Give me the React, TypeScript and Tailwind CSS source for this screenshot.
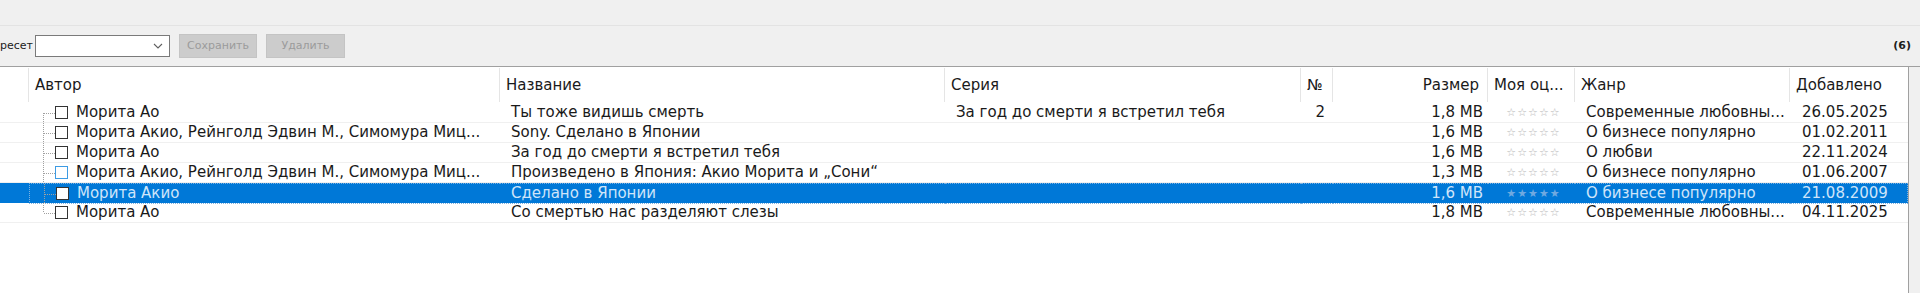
import React from "react";

type Row = {
  author: string;
  title: string;
  series?: string;
  num?: string;
  size: string;
  genre: string;
  added: string;
  selected?: boolean;
  hover?: boolean;
};

const rows: Row[] = [
  {
    author: "Морита Ао",
    title: "Ты тоже видишь смерть",
    series: "За год до смерти я встретил тебя",
    num: "2",
    size: "1,8 MB",
    genre: "Современные любовны...",
    added: "26.05.2025",
  },
  {
    author: "Морита Акио, Рейнголд Эдвин М., Симомура Миц...",
    title: "Sony. Сделано в Японии",
    size: "1,6 MB",
    genre: "О бизнесе популярно",
    added: "01.02.2011",
  },
  {
    author: "Морита Ао",
    title: "За год до смерти я встретил тебя",
    size: "1,6 MB",
    genre: "О любви",
    added: "22.11.2024",
  },
  {
    author: "Морита Акио, Рейнголд Эдвин М., Симомура Миц...",
    title: "Произведено в Япония: Акио Морита и „Сони“",
    size: "1,3 MB",
    genre: "О бизнесе популярно",
    added: "01.06.2007",
    hover: true,
  },
  {
    author: "Морита Акио",
    title: "Сделано в Японии",
    size: "1,6 MB",
    genre: "О бизнесе популярно",
    added: "21.08.2009",
    selected: true,
  },
  {
    author: "Морита Ао",
    title: "Со смертью нас разделяют слезы",
    size: "1,8 MB",
    genre: "Современные любовны...",
    added: "04.11.2025",
  },
];

const cols =
  "grid grid-cols-[29px_471px_445px_356px_32px_155px_87px_215px_118px]";

function TreeStub({ first, last }: { first: boolean; last: boolean }) {
  return (
    <svg width="12" height="20" viewBox="0 0 12 20" className="shrink-0">
      <line
        x1="0.5"
        y1={first ? 10 : 0}
        x2="0.5"
        y2={last ? 10 : 20}
        stroke="#a0a0a0"
        strokeDasharray="1 1"
      />
      <line x1="1" y1="10.5" x2="12" y2="10.5" stroke="#a0a0a0" strokeDasharray="1 1" />
    </svg>
  );
}

function HeaderCell({ label, right, last }: { label?: string; right?: boolean; last?: boolean }) {
  return (
    <div className="flex items-center h-[36px] py-[1px]">
      <div
        className={`flex items-center h-full w-full ${last ? "" : "border-r border-[#e5e5e5]"} ${
          right ? "justify-end pr-[8px]" : "pl-[6px]"
        } whitespace-nowrap overflow-hidden`}
      >
        {label}
      </div>
    </div>
  );
}

export default function App() {
  return (
    <div
      className="w-[1920px] h-[293px] bg-[#f0f0f0] flex flex-col overflow-hidden text-[#1a1a1a]"
      style={{ fontFamily: '"DejaVu Sans", Verdana, sans-serif' }}
    >
      <div className="h-[26px] border-b border-[#e3e3e3] shrink-0" />

      <div className="h-[40px] flex items-center shrink-0 text-[11px]">
        <span className="w-[35px] text-[#202020]">ресет</span>
        <div className="w-[135px] h-[22px] bg-white border border-[#7a7a7a] flex items-center justify-end pr-[6px]">
          <svg width="10" height="6" viewBox="0 0 10 6">
            <path d="M1 1l4 4 4-4" fill="none" stroke="#606060" strokeWidth="1.1" />
          </svg>
        </div>
        <div className="ml-[9px] w-[78px] h-[24px] bg-[#cccccc] border border-[#c4c4c4] flex items-center justify-center text-[#9b9b9b]">
          Сохранить
        </div>
        <div className="ml-[9px] w-[79px] h-[24px] bg-[#cccccc] border border-[#c4c4c4] flex items-center justify-center text-[#9b9b9b]">
          Удалить
        </div>
        <div className="flex-1" />
        <span className="font-bold mr-[9px] text-[#202020]">(6)</span>
      </div>

      <div className="flex-1 flex border-t border-[#a0a0a0]">
        <div className="w-[1908px] bg-white text-[15px] flex flex-col">
          <div className={cols}>
            <HeaderCell />
            <HeaderCell label="Автор" />
            <HeaderCell label="Название" />
            <HeaderCell label="Серия" />
            <HeaderCell label="№" />
            <HeaderCell label="Размер" right />
            <HeaderCell label="Моя оц..." />
            <HeaderCell label="Жанр" />
            <HeaderCell label="Добавлено" last />
          </div>

          {rows.map((r, i) => {
            const sel = !!r.selected;
            const focus = sel ? "border-y border-dotted border-[#7fb2e0]" : "";
            return (
              <div
                key={i}
                className={`${cols} h-[20px] leading-[19px] border-b ${
                  sel ? "bg-[#0078d7] border-[#0078d7] text-[#cfe5fa]" : "border-[#f0f0f0]"
                }`}
              >
                <div />
                <div
                  className={`flex items-center pl-[14px] whitespace-nowrap overflow-hidden ${
                    sel ? "border-y border-l border-dotted border-[#7fb2e0]" : ""
                  }`}
                >
                  <TreeStub first={i === 0} last={i === rows.length - 1} />
                  <span
                    className={`w-[13px] h-[13px] shrink-0 border ${
                      r.hover ? "border-[#3d9be3]" : "border-[#333333]"
                    } bg-white`}
                  />
                  <span className="ml-[8px]">{r.author}</span>
                </div>
                <div className={`pl-[11px] whitespace-nowrap overflow-hidden ${focus}`}>{r.title}</div>
                <div className={`pl-[11px] whitespace-nowrap overflow-hidden ${focus}`}>{r.series}</div>
                <div className={`text-right pr-[8px] ${focus}`}>{r.num}</div>
                <div className={`text-right pr-[5px] ${focus}`}>{r.size}</div>
                <div
                  className={`flex items-center justify-center pl-[4px] text-[11px] tracking-[1px] ${
                    sel ? "text-[#6fa9e0] border-y border-dotted border-[#7fb2e0]" : "text-[#b8b8b8]"
                  }`}
                >
                  {sel ? "★★★★★" : "☆☆☆☆☆"}
                </div>
                <div className={`pl-[11px] whitespace-nowrap overflow-hidden ${focus}`}>{r.genre}</div>
                <div
                  className={`pl-[12px] whitespace-nowrap overflow-hidden ${
                    sel ? "border-y border-r border-dotted border-[#7fb2e0]" : ""
                  }`}
                >
                  {r.added}
                </div>
              </div>
            );
          })}
          <div className="flex-1" />
        </div>
        <div className="flex-1 border-l border-[#a0a0a0] bg-[#f0f0f0]" />
      </div>
    </div>
  );
}
